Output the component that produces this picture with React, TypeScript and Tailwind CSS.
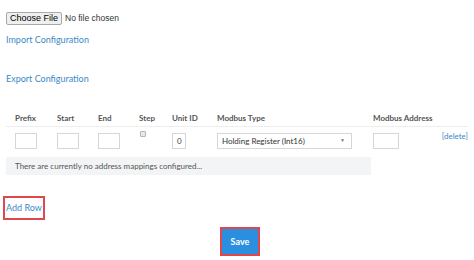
import React from "react";

// ── Column layout ────────────────────────────────────────────────────────────

const HEADERS = [
  { label: "Prefix", w: "w-[42px]" },
  { label: "Start", w: "w-[41px]" },
  { label: "End", w: "w-[41px]" },
  { label: "Step", w: "w-[33px]" },
  { label: "Unit ID", w: "w-[45px]" },
  { label: "Modbus Type", w: "w-[156px]" },
  { label: "Modbus Address", w: "w-[69px]" },
];

function TextBox({ w, value }: { w: string; value?: string }) {
  return (
    <div
      className={`${w} h-[16px] border border-[#d6d6d6] bg-white flex items-center px-[4px] text-[8px] text-[#444]`}
    >
      {value}
    </div>
  );
}

export default function App() {
  return (
    <div
      className="w-[474px] h-[260px] bg-white overflow-hidden relative"
      style={{ fontFamily: "Lato, 'Open Sans', sans-serif" }}
    >
      {/* File picker */}
      <div className="flex items-center pt-[12px] pl-[6px]">
        <div
          className="h-[13px] px-[3px] border border-[#a9a9a9] bg-[#efefef] rounded-[2px] flex items-center text-[9px] text-black"
          style={{ fontFamily: "'Liberation Sans', Arial, sans-serif" }}
        >
          Choose File
        </div>
        <span
          className="ml-[3px] text-[8.5px] text-[#333]"
          style={{ fontFamily: "'Liberation Sans', Arial, sans-serif" }}
        >
          No file chosen
        </span>
      </div>

      <div className="pl-[6px] mt-[9px] text-[9px] text-[#3b8ac8] leading-[11px]">Import Configuration</div>
      <div className="pl-[6px] mt-[28px] text-[9px] text-[#3b8ac8] leading-[11px]">Export Configuration</div>

      {/* Table */}
      <div className="mx-[6px] mt-[26px]">
        <div className="flex pl-[9px] h-[17px] items-center border-b border-[#eeeeee] text-[8px] font-bold text-[#555]">
          {HEADERS.map((h) => (
            <div key={h.label} className={h.w}>
              {h.label}
            </div>
          ))}
        </div>
        <div className="flex pl-[9px] pt-[6px] h-[30px] items-start">
          <div className="w-[42px]">
            <TextBox w="w-[22px]" />
          </div>
          <div className="w-[41px]">
            <TextBox w="w-[22px]" />
          </div>
          <div className="w-[41px]">
            <TextBox w="w-[22px]" />
          </div>
          <div className="w-[33px] pl-[1px] -mt-[2px]">
            <div className="w-[6px] h-[6px] border border-[#b5b5b5] bg-[#e9e9e9] rounded-[1px]" />
          </div>
          <div className="w-[45px]">
            <TextBox w="w-[14px]" value="0" />
          </div>
          <div className="w-[156px]">
            <div className="w-[135px] h-[16px] border border-[#d6d6d6] bg-white flex items-center justify-between px-[4px] text-[8px] text-[#333]">
              <span>Holding Register (Int16)</span>
              <span className="text-[5px] text-[#777] mr-[2px]">▼</span>
            </div>
          </div>
          <div className="w-[69px]">
            <TextBox w="w-[26px]" />
          </div>
          <div className="text-[8px] text-[#3b8ac8] -mt-[3px]">[delete]</div>
        </div>
        <div className="w-[365px] h-[18px] bg-[#f2f4f6] flex items-center pl-[9px] text-[8px] text-[#555]">
          There are currently no address mappings configured...
        </div>
      </div>

      {/* Add row */}
      <div className="ml-[3px] mt-[21px] w-[42px] h-[24px] border-2 border-[#e0474c] flex items-center pl-[1px] text-[9px] text-[#3b8ac8]">
        Add Row
      </div>

      {/* Save */}
      <div className="flex justify-center mt-[7px] pl-[6px]">
        <div className="w-[40px] h-[29px] border-2 border-[#e0474c] bg-[#2b8fdf] flex items-center justify-center text-[9px] font-bold text-white">
          Save
        </div>
      </div>
    </div>
  );
}
